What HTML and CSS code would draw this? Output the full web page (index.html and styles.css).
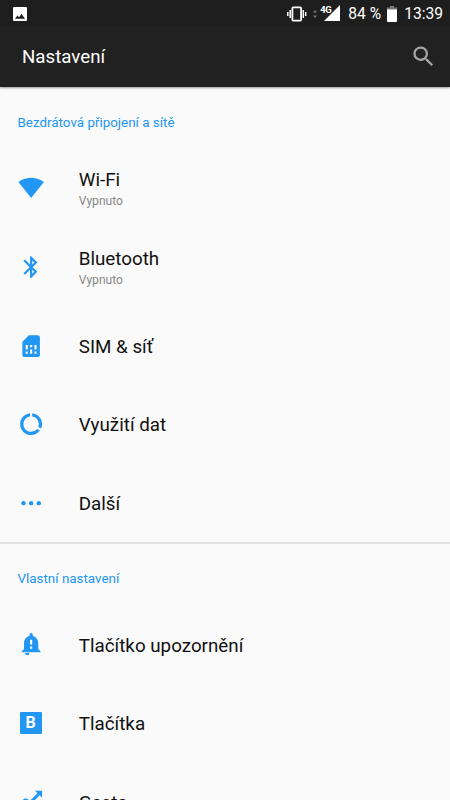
FILE: index.html
```html
<!DOCTYPE html>
<html lang="cs">
<head>
<meta charset="utf-8">
<title>Nastavení</title>
<link rel="stylesheet" href="styles.css">
</head>
<body>
<header class="top">
  <div class="status">
    <svg class="picture" width="14" height="14" viewBox="0 0 14 14"><rect width="14" height="14" rx="1" fill="#fff"/><path d="M2 11.7 4.4 8.4 6 10.2 8.6 7 12 11.7Z" fill="#1e1e1e"/></svg>
    <svg class="vibrate" width="20" height="16" viewBox="0 0 20 16" fill="none" stroke="#fff"><rect x="5.4" y="1.4" width="8.7" height="13.2" rx=".8" stroke-width="1.8"/><path d="M3.2 4v8M.8 6v4M16.300 4v8M18.700 6v4" stroke-width="1.5"/></svg>
    <svg class="arrows" width="4" height="8" viewBox="0 0 4 8" fill="#777"><path d="M0 2.5 2 0l2 2.5ZM0 5.5h4L2 8Z"/></svg>
    <div class="signal"><span>4G</span><svg width="16" height="16" viewBox="0 0 16 16"><path d="M16 0v16H0Z" fill="#fff"/></svg></div>
    <span class="percent">84 %</span>
    <svg class="battery" width="10" height="16" viewBox="0 0 10 16"><path d="M3 0h4v1.500h3V4H0V1.500h3Z" fill="#777"/><path d="M0 3.500h10V15a1 1 0 0 1-1 1H1a1 1 0 0 1-1-1Z" fill="#fff"/></svg>
    <span class="time">13:39</span>
  </div>
  <div class="bar">
    <h1>Nastavení</h1>
    <svg class="search" viewBox="0 0 24 24" fill="#a6a6a6"><path d="M15.500 14h-.79l-.28-.27A6.470 6.470 0 0 0 16 9.500 6.500 6.500 0 1 0 9.500 16c1.610 0 3.090-.59 4.230-1.570l.27.28v.79l5 4.990L20.490 19l-4.990-5zm-6 0a4.500 4.500 0 1 1 0-9 4.500 4.500 0 0 1 0 9z"/></svg>
  </div>
</header>
<main>
  <section>
    <h2>Bezdrátová připojení a sítě</h2>
    <div class="row"><svg class="icon" viewBox="0 0 24 24"><path d="M12 21 23.640 6.500C23.190 6.160 18.710 2.500 12 2.500S.81 6.160.36 6.500Z"/></svg><div class="label"><b>Wi-Fi</b><small>Vypnuto</small></div></div>
    <div class="row"><svg class="icon" viewBox="0 0 24 24"><path d="M17.710 7.710 12 2h-1v7.590L6.410 5 5 6.410 10.590 12 5 17.590 6.410 19 11 14.410V22h1l5.710-5.710-4.300-4.290 4.300-4.290zM13 5.830l1.880 1.880L13 9.590V5.830zm1.880 10.460L13 18.170v-3.760l1.880 1.880z"/></svg><div class="label"><b>Bluetooth</b><small>Vypnuto</small></div></div>
    <div class="row"><svg class="icon" viewBox="0 0 24 24"><path d="M18 2h-8L4.020 8 4 20c0 1.100.9 2 2 2h12c1.100 0 2-.9 2-2V4c0-1.100-.9-2-2-2zM9 19H7v-2h2v2zm8 0h-2v-2h2v2zm-8-4H7v-4h2v4zm4 4h-2v-4h2v4zm0-6h-2v-2h2v2zm4 2h-2v-4h2v4z"/></svg><div class="label"><b>SIM &amp; síť</b></div></div>
    <div class="row"><svg class="icon" viewBox="0 0 24 24"><path d="M13 2.050v3.030c3.390.490 6 3.390 6 6.920 0 .9-.18 1.750-.48 2.540l2.600 1.530c.56-1.240.88-2.620.88-4.070 0-5.180-3.950-9.450-9-9.950zM12 19c-3.870 0-7-3.130-7-7 0-3.530 2.610-6.430 6-6.920V2.050c-5.060.5-9 4.760-9 9.950 0 5.520 4.470 10 9.990 10 3.310 0 6.240-1.610 8.060-4.090l-2.600-1.530A6.950 6.950 0 0 1 12 19z"/></svg><div class="label"><b>Využití dat</b></div></div>
    <div class="row"><svg class="icon" viewBox="0 0 24 24"><circle cx="5" cy="12" r="2"/><circle cx="12" cy="12" r="2"/><circle cx="19" cy="12" r="2"/></svg><div class="label"><b>Další</b></div></div>
  </section>
  <section>
    <h2>Vlastní nastavení</h2>
    <div class="row"><svg class="icon" viewBox="0 0 24 24"><path fill-rule="evenodd" transform="translate(0 -1)" d="M18.500 16.500V11c0-3.070-2.140-5.640-5-6.320V3.500a1.500 1.500 0 0 0-3 0v1.180C7.630 5.360 5.500 7.920 5.500 11v5.500l-2 2v1h17v-1zM11 8h2v4.500h-2zM11 14.300h2v2h-2zM6.500 20.300h4a2 2 0 0 1-4 0Z"/></svg><div class="label"><b>Tlačítko upozornění</b></div></div>
    <div class="row"><span class="icon button-icon">B</span><div class="label"><b>Tlačítka</b></div></div>
    <div class="row"><svg class="icon" viewBox="0 0 24 24"><path d="M15.500 1.500H22V8l-2.200-2.200-7 7-2-2 7-7ZM3.500 14c0-6.500 5.500-6.500 6.500-3l-2 1c-1-2-2.500-1-2.500 2Z"/></svg><div class="label"><b>Gesta</b></div></div>
  </section>
</main>
</body>
</html>
```
FILE: styles.css
```css
* { box-sizing: border-box; }
body {
  margin: 0;
  height: 800px;
  overflow: hidden;
  background: #fafafa;
  color: #111;
  font-family: Roboto, "Liberation Sans", sans-serif;
}
.top {
  height: 87px;
  background: #212121;
  color: #fff;
  box-shadow: 0 1px 2px rgba(0, 0, 0, .4);
}
.status {
  display: flex;
  align-items: center;
  height: 27px;
  padding: 0 7px 0 13px;
  background: #1e1e1e;
  font-size: 15.600px;
  line-height: 27px;
}
.status svg { flex: none; }
.vibrate { margin-left: auto; }
.arrows { margin-left: 6px; }
.signal { position: relative; width: 20px; height: 16px; margin-left: 3px; }
.signal svg { position: absolute; right: 0; top: -1px; }
.signal span {
  position: absolute;
  left: 0;
  top: 0;
  font-size: 9.500px;
  font-weight: 700;
  line-height: 8px;
  letter-spacing: -.5px;
}
.percent { margin-left: 8px; padding-top: 2px; }
.battery { margin-left: 6px; }
.time { margin-left: 7px; padding-top: 2px; }
.bar {
  display: flex;
  align-items: center;
  justify-content: space-between;
  height: 59px;
  padding: 0 13px 0 22px;
}
h1 { margin: 0; font-size: 18.700px; font-weight: 400; }
.search { width: 27px; height: 27px; }
h2 {
  margin: 0;
  height: 62px;
  padding: 26px 17.500px 0;
  color: #2196f3;
  font-size: 13.400px;
  font-weight: 400;
  line-height: 20px;
}
section + section { border-top: 2px solid #e3e3e3; }
section + section h2 { height: 61px; padding-top: 25px; }
.row {
  display: flex;
  align-items: center;
  height: 78.700px;
  padding-left: 17.500px;
}
.icon {
  flex: none;
  width: 26.250px;
  height: 26.250px;
  margin-right: 35px;
  fill: #2196f3;
}
.label { display: flex; flex-direction: column; padding-top: 3px; }
.label b { font-size: 18.800px; font-weight: 400; line-height: 23px; }
.label small { color: #888; font-size: 12.100px; line-height: 18px; }
.button-icon {
  width: 22px;
  height: 22px;
  margin: 0 37.250px 0 2px;
  border-radius: 1px;
  background: #2196f3;
  color: #fff;
  font-size: 16px;
  font-weight: 700;
  line-height: 22px;
  text-align: center;
}
```
